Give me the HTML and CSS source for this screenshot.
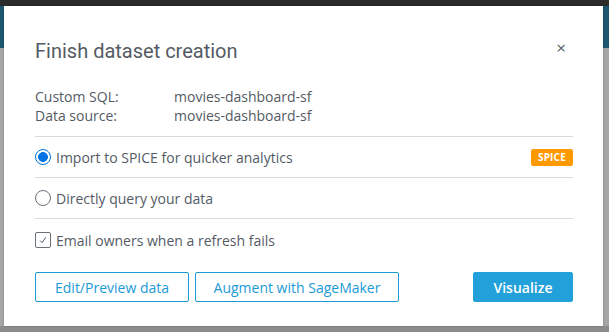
FILE: index.html
```html
<!DOCTYPE html>
<html>
<head>
<meta charset="utf-8">
<link rel="stylesheet" href="styles.css">
</head>
<body>
<div class="page">
  <div class="modal">
    <div class="header">
      <h1 class="title">Finish dataset creation</h1>
      <span class="close">×</span>
    </div>
    <div class="meta">
      <div class="meta-row"><span class="meta-key">Custom SQL:</span><span class="meta-val">movies-dashboard-sf</span></div>
      <div class="meta-row"><span class="meta-key">Data source:</span><span class="meta-val">movies-dashboard-sf</span></div>
    </div>
    <div class="option">
      <span class="radio checked"></span>
      <span class="opt-label">Import to SPICE for quicker analytics</span>
      <span class="badge">SPICE</span>
    </div>
    <div class="option">
      <span class="radio"></span>
      <span class="opt-label">Directly query your data</span>
    </div>
    <div class="option last">
      <span class="checkbox"><svg width="10" height="10" viewBox="0 0 10 10"><path d="M2.2 5.6 L4.1 7.6 L7.8 2.2" fill="none" stroke="#545b64" stroke-width="1"/></svg></span>
      <span class="opt-label">Email owners when a refresh fails</span>
    </div>
    <div class="actions">
      <button class="btn btn-edit">Edit/Preview data</button>
      <button class="btn btn-aug">Augment with SageMaker</button>
      <span class="spacer"></span>
      <button class="btn btn-primary">Visualize</button>
    </div>
  </div>
</div>
</body>
</html>
```
FILE: styles.css
```css
html, body {
  margin: 0;
  padding: 0;
}
body {
  width: 609px;
  height: 332px;
  overflow: hidden;
  background: linear-gradient(to bottom, #2b2b2b 0, #2b2b2b 6px, #1d5670 6px, #1d5670 48px, #a6a6a6 48px, #a6a6a6 326px, #8c8c8c 326px);
  font-family: "Open Sans", "Liberation Sans", sans-serif;
  color: #545b64;
}
.page {
  padding: 6px 6px 0 4px;
}
.modal {
  width: 599px;
  height: 320px;
  box-sizing: border-box;
  background: #fff;
  padding: 0 30px 0 31px;
  display: flex;
  flex-direction: column;
  box-shadow: 0 0 2px rgba(0,0,0,0.25);
}
.header {
  display: flex;
  align-items: center;
  justify-content: space-between;
  height: 36px;
  margin-top: 27px;
}
.title {
  margin: 0;
  font-family: Roboto, "Open Sans", sans-serif;
  font-weight: 400;
  font-size: 20px;
  color: #545b64;
}
.close {
  font-size: 17px;
  line-height: 1;
  color: #545b64;
  margin-right: 7px;
  margin-top: -8px;
}
.meta {
  margin-top: 18px;
  padding-bottom: 11px;
  border-bottom: 1px solid #d5dbdb;
  font-size: 14px;
}
.meta-row {
  display: flex;
  height: 19px;
  align-items: center;
}
.meta-key {
  width: 139px;
}
.option {
  display: flex;
  align-items: center;
  height: 40px;
  border-bottom: 1px solid #d5dbdb;
  font-size: 14px;
}
.option.last {
  border-bottom: none;
  height: 42px;
}
.radio {
  width: 16px;
  height: 16px;
  border: 1px solid #687078;
  border-radius: 50%;
  box-sizing: border-box;
  margin-right: 5px;
  flex: none;
}
.radio.checked {
  border: 1.5px solid #0073e6;
  background: radial-gradient(circle, #0073e6 0, #0073e6 4.6px, #fff 5.2px);
}
.checkbox {
  width: 16px;
  height: 16px;
  border: 1px solid #687078;
  border-radius: 2px;
  box-sizing: border-box;
  margin-right: 5px;
  flex: none;
  display: flex;
  align-items: center;
  justify-content: center;
}
.opt-label {
  flex: 1;
}
.badge {
  background: #ff9900;
  color: #fff;
  font-weight: 700;
  font-size: 10px;
  padding: 0 7px;
  height: 17px;
  line-height: 17px;
  border-radius: 2px;
  letter-spacing: 0.2px;
}
.actions {
  display: flex;
  gap: 6px;
  margin-top: 11px;
}
.spacer {
  flex: 1;
}
.btn {
  height: 30px;
  box-sizing: border-box;
  border: 1px solid #1c9ad6;
  background: #fff;
  color: #1c9ad6;
  font-family: "Open Sans", "Liberation Sans", sans-serif;
  font-size: 14px;
  border-radius: 2px;
  padding: 0;
}
.btn-edit { width: 154px; }
.btn-aug { width: 204px; }
.btn-primary {
  width: 100px;
  background: #22a0d9;
  border-color: #22a0d9;
  color: #fff;
  font-weight: 600;
}
```
